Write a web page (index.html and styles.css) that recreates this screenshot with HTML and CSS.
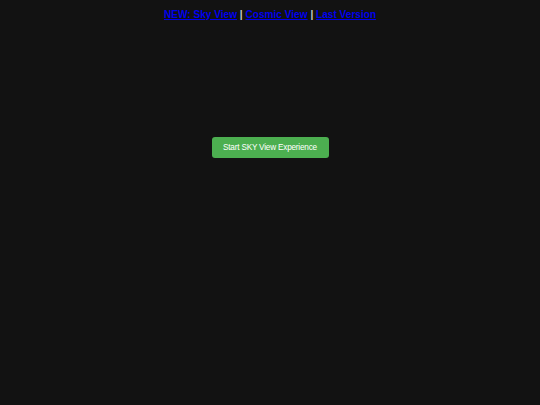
FILE: index.html
```html
<!DOCTYPE html>
<html>
<head>
<meta charset="utf-8">
<link rel="stylesheet" href="styles.css">
</head>
<body>
<nav class="nav">
<a href="#">NEW: Sky View</a> <span class="sep">|</span> <a href="#">Cosmic View</a> <span class="sep">|</span> <a href="#">Last Version</a>
</nav>
<main class="stage">
<button class="start">Start SKY View Experience</button>
</main>
</body>
</html>
```
FILE: styles.css
```css
html, body {
  margin: 0;
  padding: 0;
  background: #121212;
  height: 100%;
}
body {
  font-family: "Liberation Sans", Arial, sans-serif;
}
.nav {
  text-align: center;
  padding-top: 8px;
  font-size: 10.1px;
  font-weight: bold;
  line-height: 13px;
}
.nav a {
  color: #0000ee;
}
.sep {
  color: #cccccc;
}
.stage {
  display: flex;
  justify-content: center;
  padding-top: 116px;
}
.start {
  background: #4caf50;
  color: #ffffff;
  border: none;
  border-radius: 3px;
  width: 117px;
  height: 21px;
  font-family: "Liberation Sans", Arial, sans-serif;
  font-size: 8.2px;
  letter-spacing: -0.2px;
  padding: 0 0 1px;
}
```
